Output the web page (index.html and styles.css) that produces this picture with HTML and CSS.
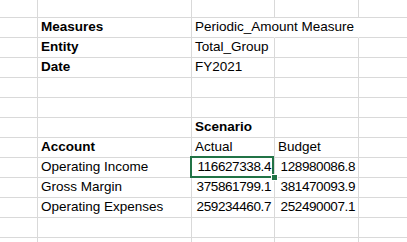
FILE: index.html
```html
<!DOCTYPE html>
<html>
<head>
<meta charset="utf-8">
<link rel="stylesheet" href="styles.css">
</head>
<body>
<div class="sheet">
  <div class="c"></div><div class="c"></div><div class="c"></div><div class="c"></div><div class="c"></div>

  <div class="c"></div><div class="c b">Measures</div><div class="c nr ov">Periodic_Amount Measure</div><div class="c nr"></div><div class="c"></div>

  <div class="c"></div><div class="c b">Entity</div><div class="c">Total_Group</div><div class="c"></div><div class="c"></div>

  <div class="c"></div><div class="c b">Date</div><div class="c">FY2021</div><div class="c"></div><div class="c"></div>

  <div class="c"></div><div class="c"></div><div class="c"></div><div class="c"></div><div class="c"></div>

  <div class="c"></div><div class="c"></div><div class="c"></div><div class="c"></div><div class="c"></div>

  <div class="c"></div><div class="c"></div><div class="c b">Scenario</div><div class="c"></div><div class="c"></div>

  <div class="c"></div><div class="c b">Account</div><div class="c">Actual</div><div class="c">Budget</div><div class="c"></div>

  <div class="c"></div><div class="c">Operating Income</div><div class="c num sel">116627338.4<span class="handle"></span></div><div class="c num">128980086.8</div><div class="c"></div>

  <div class="c"></div><div class="c">Gross Margin</div><div class="c num">375861799.1</div><div class="c num">381470093.9</div><div class="c"></div>

  <div class="c"></div><div class="c">Operating Expenses</div><div class="c num">259234460.7</div><div class="c num">252490007.1</div><div class="c"></div>

  <div class="c"></div><div class="c"></div><div class="c"></div><div class="c"></div><div class="c"></div>

  <div class="c end"></div><div class="c end"></div><div class="c end"></div><div class="c end"></div><div class="c end"></div>
</div>
</body>
</html>
```

FILE: styles.css
```css
html, body {
  margin: 0;
  padding: 0;
  background: #ffffff;
  overflow: hidden;
}

.sheet {
  display: grid;
  width: 407px;
  grid-template-columns: 38px 154px 83px 84px 1fr;
  grid-template-rows: 18px repeat(11, 20px) 4px;
  font-family: "Liberation Sans", Arial, sans-serif;
  font-size: 13.5px;
  color: #000000;
}

.c {
  box-sizing: border-box;
  border-right: 1px solid #d9d9d9;
  border-bottom: 1px solid #d9d9d9;
  padding: 0 3px 3px 3px;
  display: flex;
  align-items: flex-end;
  line-height: 15px;
  white-space: nowrap;
  position: relative;
}

.c:nth-child(5n) {
  border-right: 0;
}

.end {
  border-bottom: 0;
  padding: 0;
}

.b {
  font-weight: bold;
}

.nr {
  border-right-color: transparent;
}

.ov {
  overflow: visible;
  z-index: 1;
}

.num {
  justify-content: flex-end;
  padding-right: 3px;
  letter-spacing: -0.4px;
}

.sel::after {
  content: "";
  position: absolute;
  left: -2px;
  top: -2px;
  right: 0px;
  bottom: -1px;
  border: 2px solid #217346;
  pointer-events: none;
}

.handle {
  position: absolute;
  right: -4px;
  bottom: -4px;
  width: 5px;
  height: 5px;
  background: #217346;
  border: 1px solid #ffffff;
  z-index: 2;
}
```
